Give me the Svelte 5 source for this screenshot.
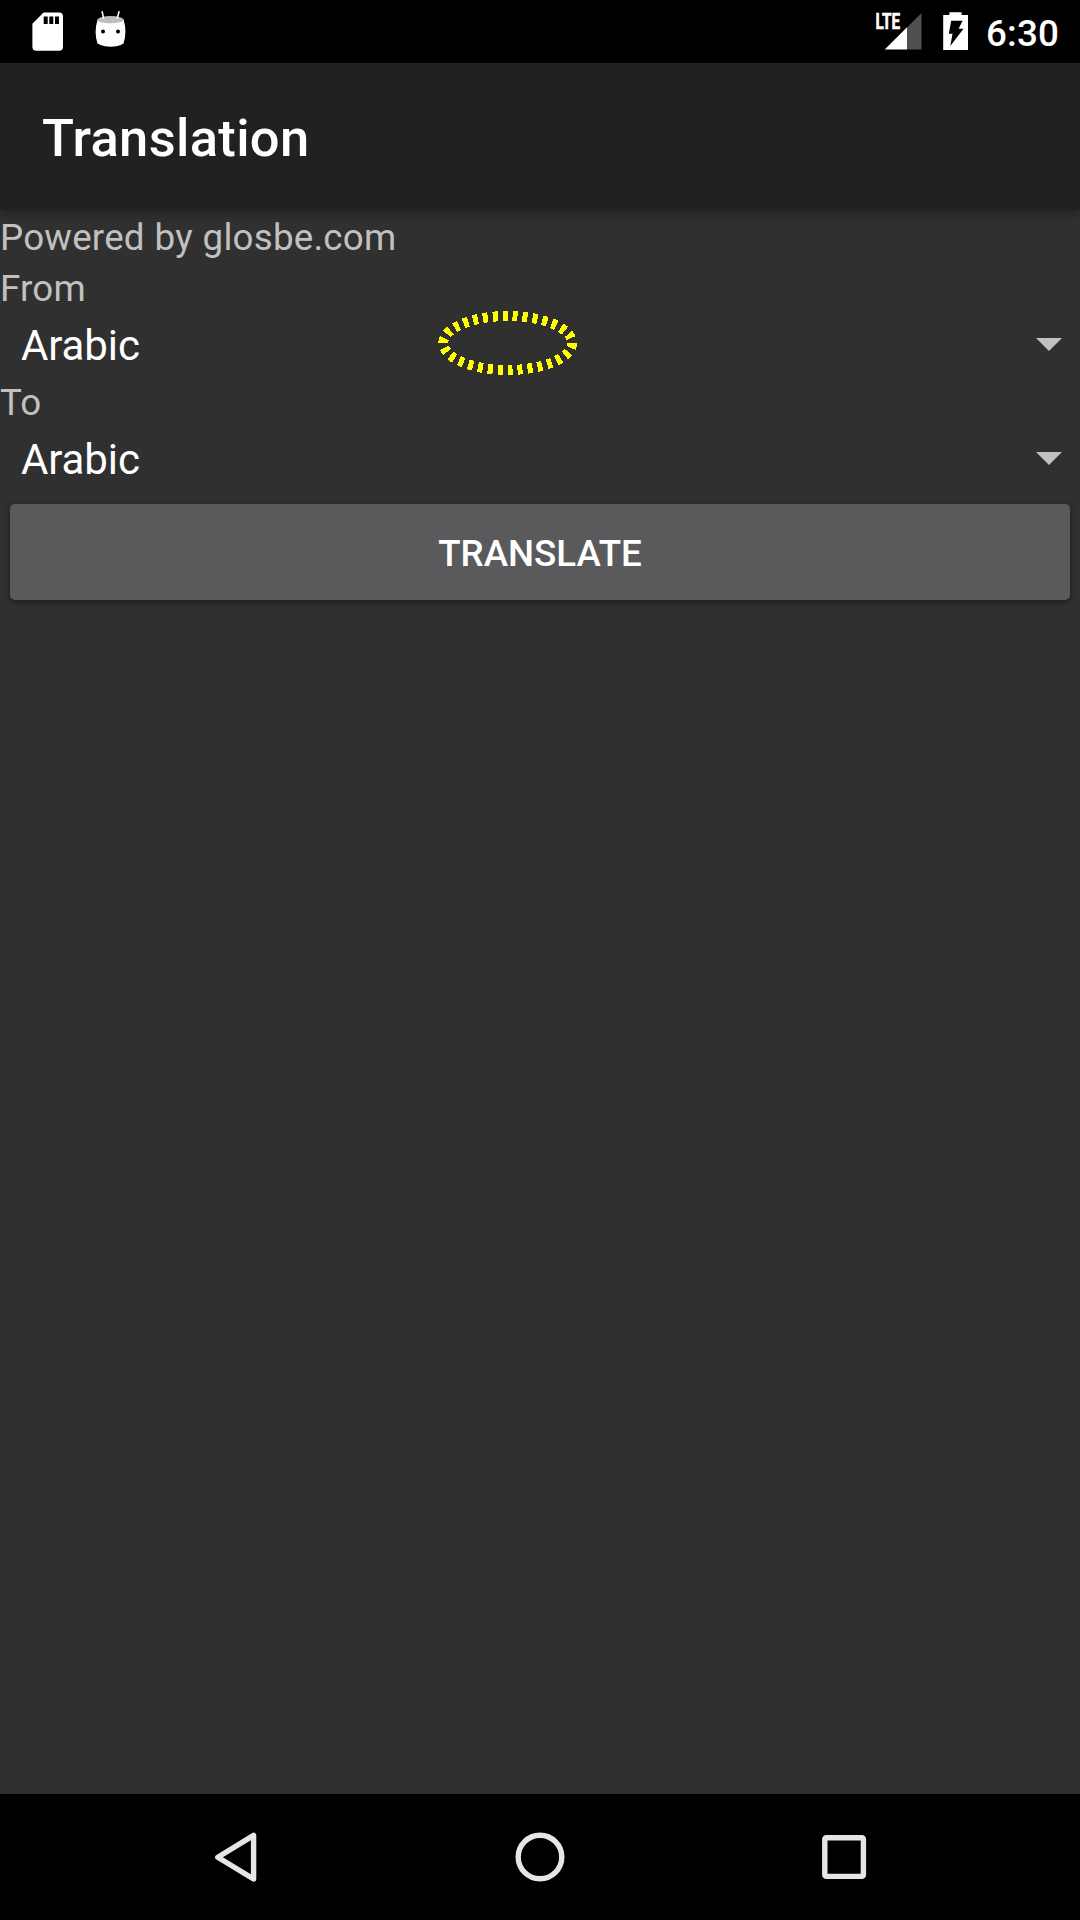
<script>
  const fields = [
    { label: 'From', value: 'Arabic' },
    { label: 'To', value: 'Arabic' },
  ];
</script>

<div class="screen">
  <header class="status">
    <div class="group">
      <svg class="icon sd" viewBox="0 0 32 63" aria-hidden="true">
        <path fill="#fff" d="M11.5 12.5H27Q31 12.5 31 16.5V46.8Q31 50.7 27 50.7H4.3Q.4 50.7 .4 46.8V23.7Z" />
        <path fill="#000" d="M11.7 16.5h4v7.6h-4zM17.3 16.5h4v7.6h-4zM23 16.5h4v7.6h-4z" />
      </svg>
      <svg class="icon droid" viewBox="0 0 32 63" aria-hidden="true">
        <path fill="#fff" d="M2.6 19.5Q-1.3 32 2.5 43.5Q8.5 46.8 15.7 46.8T28.5 43.5Q32.3 32 28.6 19.5Z" />
        <ellipse cx="15.6" cy="19.7" rx="13" ry="3.6" fill="#bdbdbd" />
        <path stroke="#fff" stroke-width="1.6" stroke-linecap="round" d="M7.2 11.8l1.3 6.3M24 11.8l-1.7 6.3" />
        <circle cx="8" cy="31.5" r="2" fill="#000" />
        <circle cx="23" cy="31.5" r="2" fill="#000" />
      </svg>
    </div>
    <div class="group">
      <svg class="icon signal" viewBox="0 0 46 63" aria-hidden="true">
        <path fill="#505050" d="M45.5 13V49.5H31V27.5Z" />
        <path fill="#fff" d="M31 27.3V49.5H8.7Z" />
        <text x="-.6" y="29" textLength="24.6" lengthAdjust="spacingAndGlyphs">LTE</text>
      </svg>
      <svg class="icon battery" viewBox="0 0 26 63" aria-hidden="true">
        <path fill="#fff" d="M.2 15H6.4V12.2H18.6V15H25V50H.2Z" />
        <path fill="#000" d="M8.2 20.8H19.6L15.6 28.8H20.5L7.3 46L9.5 33.7H5.8Z" />
      </svg>
      <span class="clock">6:30</span>
    </div>
  </header>

  <div class="toolbar"><h1>Translation</h1></div>

  <main>
    <p class="label">Powered by glosbe.com</p>
    {#each fields as field}
      <p class="label">{field.label}</p>
      <div class="spinner">
        <span>{field.value}</span>
        <svg class="arrow" viewBox="0 0 26 13" aria-hidden="true"><path fill="#c1c1c1" d="M0 0H26L13 13Z" /></svg>
      </div>
    {/each}
    <button>TRANSLATE</button>
    <svg class="marker" viewBox="0 0 140 66" aria-hidden="true">
      <path d="M134.1 33A64.4 27 0 0 1 5.3 33A64.4 27 0 0 1 134.1 33" pathLength="300" />
    </svg>
  </main>

  <nav>
    <svg class="nav-icon" viewBox="0 0 54 54" aria-hidden="true"><path d="M8.8 27.2L44.6 5.4V49Z" stroke-linejoin="round" /></svg>
    <svg class="nav-icon" viewBox="0 0 54 54" aria-hidden="true"><circle cx="27" cy="27" r="21.8" /></svg>
    <svg class="nav-icon" viewBox="0 0 54 54" aria-hidden="true"><rect x="7.8" y="7.8" width="38.6" height="38.6" rx="1.5" /></svg>
  </nav>
</div>

<style>
  :global(body) { margin: 0; background: #000; }
  .screen {
    width: 1080px;
    height: 1920px;
    display: flex;
    flex-direction: column;
    overflow: hidden;
    background: #303030;
    color: #fff;
    font-family: Roboto, sans-serif;
  }
  svg { display: block; flex: none; }
  .status {
    height: 63px;
    display: flex;
    justify-content: space-between;
    padding: 0 21px 0 32px;
    background: #000;
    flex: none;
  }
  .group { display: flex; }
  .icon { height: 63px; }
  .sd { width: 32px; margin-right: 31px; }
  .droid { width: 32px; }
  .signal { width: 46px; margin-right: 21px; overflow: visible; }
  .signal text { fill: #fff; stroke: #fff; stroke-width: 0.6; font: 700 21.5px Roboto, sans-serif; }
  .battery { width: 26px; margin-right: 17.3px; }
  .clock { font-size: 36.75px; font-weight: 500; line-height: 67px; letter-spacing: 0.15px; }
  .toolbar {
    height: 147px;
    flex: none;
    box-sizing: border-box;
    display: flex;
    align-items: center;
    padding: 4px 0 0 42px;
    background: #212121;
    box-shadow: 0 3px 10px rgba(0, 0, 0, 0.3);
    z-index: 1;
  }
  h1 { margin: 0; font-size: 52.5px; font-weight: 500; line-height: 63px; letter-spacing: 0.33px; }
  main { position: relative; flex: 1; display: flex; flex-direction: column; }
  .label {
    margin: 0;
    height: 51px;
    font-size: 36.75px;
    line-height: 55px;
    letter-spacing: 0.2px;
    word-spacing: 0.5px;
    color: #c1c1c1;
  }
  .spinner {
    height: 63px;
    box-sizing: border-box;
    display: flex;
    align-items: center;
    justify-content: space-between;
    padding: 2px 18.5px 0 21px;
    font-size: 42px;
    line-height: 61px;
    letter-spacing: -0.1px;
  }
  .spinner span { padding-top: 2px; }
  .arrow { width: 26px; height: 13px; }
  button {
    height: 96px;
    box-sizing: border-box;
    margin: 15px 10px;
    padding: 3px 0 0;
    border: 0;
    border-radius: 5px;
    background: #5a5a5c;
    box-shadow: 0 2px 6px rgba(0, 0, 0, 0.4);
    color: #fff;
    font: 500 36.75px/93px Roboto, sans-serif;
  }
  .marker { position: absolute; left: 438px; top: 100px; width: 140px; height: 66px; }
  .marker path { fill: none; stroke: #ff0; stroke-width: 10; stroke-dasharray: 5 5; shape-rendering: crispEdges; }
  nav {
    height: 126px;
    flex: none;
    display: flex;
    justify-content: center;
    align-items: center;
    gap: 250px;
    background: #000;
  }
  .nav-icon { width: 54px; height: 54px; fill: none; stroke: #e6e6e6; stroke-width: 5.4; }
</style>
